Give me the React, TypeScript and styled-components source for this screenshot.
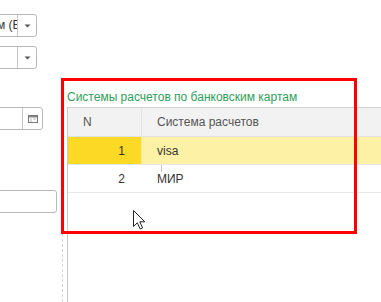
import styled, {createGlobalStyle} from "styled-components"
import {FC} from "react"

const GlobalStyle = createGlobalStyle`
  html, body {
    margin: 0;
    padding: 0;
    background: #fff;
  }
  body {
    font-family: "Liberation Sans", Arial, sans-serif;
    font-size: 12px;
    color: #333;
  }
`

const rows = [
  {n: 1, name: "visa", selected: true},
  {n: 2, name: "МИР", selected: false},
]

const App: FC = () => {
  return <Page>
    <GlobalStyle />
    <LeftPane>
      <Field $gap={14} $right={37}>
        <FieldText>м (Е</FieldText>
        <FieldButton><DropArrow /></FieldButton>
      </Field>
      <Field $gap={9} $right={37}>
        <FieldText />
        <FieldButton><DropArrow /></FieldButton>
      </Field>
      <Field $gap={38} $right={43}>
        <FieldText />
        <FieldButton $wide><CalendarIcon /></FieldButton>
      </Field>
      <Field $gap={60} $right={57}>
        <FieldText />
      </Field>
    </LeftPane>
    <Splitter />
    <Content>
      <Title>Системы расчетов по банковским картам</Title>
      <Table>
        <HeaderRow>
          <NumCell $header>N</NumCell>
          <NameCell $header>Система расчетов</NameCell>
        </HeaderRow>
        {
          rows.map((row) =>
            <Row key={`row-${row.n}`} $selected={row.selected}>
              <NumCell $selected={row.selected} $align="right">{row.n}</NumCell>
              <NameCell $tick={!row.selected}>{row.name}</NameCell>
            </Row>
          )
        }
      </Table>
    </Content>
    <Highlight />
    <Cursor />
  </Page>
}

const DropArrow: FC = () =>
  <svg width="7" height="4" viewBox="0 0 7 4">
    <path d="M0.5 0.5 L6.5 0.5 L3.5 3.5 Z" fill="#555" />
  </svg>

const CalendarIcon: FC = () =>
  <svg width="10" height="8" viewBox="0 0 10 8">
    <rect x="0.5" y="0.5" width="9" height="7" fill="#fff" stroke="#777" />
    <rect x="1" y="1" width="8" height="1.5" fill="#888" />
    <path d="M2 4 H4 M5 4 H8 M2 6 H4" stroke="#bbb" strokeWidth="1" />
  </svg>

const Cursor: FC = () =>
  <CursorBox width="13" height="20" viewBox="0 0 13 20">
    <path
      d="M0.5 0.5 L0.5 16.5 L4.3 12.8 L7.2 19 L9.6 17.9 L6.8 11.8 L11.8 11.8 Z"
      fill="#fff"
      stroke="#222"
      strokeWidth="1"
      strokeLinejoin="miter"
    />
  </CursorBox>

const Page = styled.div`
  position: relative;
  display: flex;
  width: 381px;
  height: 302px;
  overflow: hidden;
`

const LeftPane = styled.div`
  width: 62px;
  flex: none;
  display: flex;
  flex-direction: column;
`

const Field = styled.div<{$gap: number; $right: number}>`
  display: flex;
  box-sizing: border-box;
  height: 23px;
  margin-top: ${(p) => p.$gap}px;
  margin-left: -60px;
  width: ${(p) => p.$right + 60}px;
  border: 1px solid #b9b9b9;
  border-radius: 3px;
  background: #fff;
`

const FieldText = styled.div`
  flex: 1;
  overflow: hidden;
  white-space: nowrap;
  padding-left: 56px;
  line-height: 21px;
  color: #333;
`

const FieldButton = styled.div<{$wide?: boolean}>`
  width: ${(p) => (p.$wide ? 19 : 18)}px;
  flex: none;
  display: flex;
  align-items: center;
  justify-content: center;
  border-left: 1px solid #c4c4c4;
`

const Splitter = styled.div`
  width: 0;
  flex: none;
  margin-top: 84px;
  border-left: 1px dashed #d6d6d6;
  margin-right: 4px;
`

const Content = styled.div`
  flex: 1;
  display: flex;
  flex-direction: column;
  padding-top: 90px;
  min-width: 0;
`

const Title = styled.div`
  line-height: 14px;
  height: 14px;
  margin-bottom: 3px;
  color: #2f9e5a;
  white-space: nowrap;
`

const Table = styled.div`
  flex: 1;
  border-left: 1px solid #c9c9c9;
  border-top: 1px solid #d3d3d3;
`

const HeaderRow = styled.div`
  display: flex;
  height: 28px;
  background: #f2f2f2;
  border-bottom: 1px solid #e2e2e2;
  color: #555;
`

const Row = styled.div<{$selected?: boolean}>`
  display: flex;
  height: 27px;
  background: ${(p) => (p.$selected ? "#fdf1a6" : "#fff")};
  border-bottom: 1px solid #e8e8e8;
`

const NumCell = styled.div<{$header?: boolean; $selected?: boolean; $align?: string}>`
  width: 74px;
  flex: none;
  display: flex;
  align-items: center;
  justify-content: ${(p) => (p.$align === "right" ? "flex-end" : "flex-start")};
  padding: ${(p) => (p.$align === "right" ? "0 16px 0 0" : "0 0 0 15px")};
  box-sizing: border-box;
  border-right: 1px solid ${(p) => (p.$header ? "#e4e4e4" : p.$selected ? "#f7e9a0" : "transparent")};
  background: ${(p) => (p.$selected ? "#fcd925" : "transparent")};
`

const NameCell = styled.div<{$header?: boolean; $tick?: boolean}>`
  position: relative;
  flex: 1;
  display: flex;
  align-items: center;
  padding-left: 15px;
  white-space: nowrap;
  &::before {
    content: "";
    display: ${(p) => (p.$tick ? "block" : "none")};
    position: absolute;
    left: 19px;
    top: 0;
    width: 1px;
    height: 7px;
    background: #c8c8c8;
  }
`

const Highlight = styled.div`
  position: absolute;
  left: 61px;
  top: 78px;
  width: 296px;
  height: 156px;
  box-sizing: border-box;
  border: 3px solid #ff0000;
  pointer-events: none;
`

const CursorBox = styled.svg`
  position: absolute;
  left: 133px;
  top: 210px;
`

export default App
